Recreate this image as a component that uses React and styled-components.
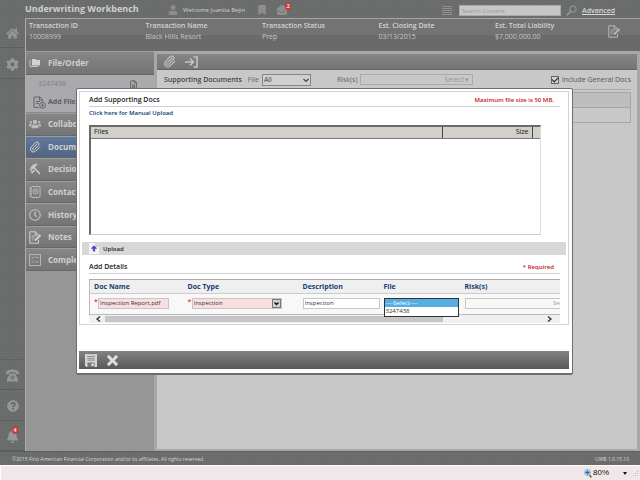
import React from "react";
import styled, { createGlobalStyle } from "styled-components";
import {
  FaHome,
  FaCog,
  FaQuestionCircle,
  FaBell,
  FaUser,
  FaBookmark,
  FaEnvelopeOpen,
  FaUsers,
  FaRegClock,
} from "react-icons/fa";
import { ImCross } from "react-icons/im";
import { Paperclip, FileUser } from "lucide-react";

const GlobalStyle = createGlobalStyle`
  * {
    box-sizing: border-box;
  }
  body {
    margin: 0;
    font-family: "Open Sans", "Noto Sans", sans-serif;
    font-size: 7px;
    line-height: 10px;
    color: #333;
  }
  button, input, select {
    font: inherit;
    color: inherit;
    margin: 0;
    padding: 0;
    border: none;
    border-radius: 0;
    background: none;
  }
  svg {
    display: block;
    flex: none;
  }
`;

const dots = `
  background-color: #6a6c6c;
  background-image: radial-gradient(#717373 1px, transparent 1px);
  background-size: 3px 3px;
`;

const Page = styled.div`
  min-height: 100vh;
  display: flex;
  flex-direction: column;
  background: #a8a8a8;
`;

const Header = styled.header`
  ${dots}
  height: 18px;
  padding-left: 25px;
  display: grid;
  grid-template-columns: 143px 1fr 198px;
  align-items: center;
  color: #cfcfcf;
`;

const Brand = styled.h1`
  margin: 0;
  font-size: 9px;
  font-weight: 700;
  line-height: 16px;
  white-space: nowrap;
`;

const UserBar = styled.div`
  display: flex;
  align-items: center;
  font-size: 6px;
  color: #d2d2d2;
  white-space: nowrap;
  padding-top: 2px;
  > svg {
    color: #8c8c8c;
  }
  span {
    margin: 0 12px 0 5px;
  }
`;

const IconButton = styled.button`
  position: relative;
  display: flex;
  align-items: center;
  justify-content: center;
  color: ${(props) => props.$color || "#8e8e8e"};
  margin-right: ${(props) => props.$gap || 0}px;
`;

const Badge = styled.b`
  position: absolute;
  top: ${(props) => props.$top || -3}px;
  right: ${(props) => props.$right || 0}px;
  width: 6px;
  height: 8px;
  border-radius: 3px;
  background: #c93b3b;
  color: #f3dada;
  font-size: 6px;
  line-height: 8px;
  text-align: center;
`;

const SearchBar = styled.form`
  display: flex;
  align-items: center;
  gap: 5px;
  padding-top: 3px;
`;

const SearchInput = styled.input`
  width: 102px;
  height: 11px;
  padding: 0 2px;
  background: #c6c6c6;
  border: 1px solid #a8a8a8;
  font-size: 6px;
  &::placeholder {
    color: #9a9a9a;
    opacity: 1;
  }
`;

const AdvancedLink = styled.a`
  font-weight: 600;
  color: #d8d8d8;
`;

const Shell = styled.div`
  flex: 1;
  display: flex;
`;

const Rail = styled.nav`
  ${dots}
  width: 25px;
  display: flex;
  flex-direction: column;
`;

const RailButton = styled.button`
  position: relative;
  height: ${(props) => (props.$first ? 30 : 31)}px;
  padding-top: 2px;
  display: flex;
  align-items: center;
  justify-content: center;
  color: #969898;
  border-bottom: 1px solid #5c5e5e;
`;

const RailSpace = styled.div`
  flex: 1;
  border-bottom: 1px solid #606262;
`;

const Body = styled.div`
  flex: 1;
  display: flex;
  flex-direction: column;
  min-width: 0;
  border-left: 1px solid #aeaeae;
`;

const Summary = styled.dl`
  margin: 0;
  height: 33px;
  padding: 2px 19px 0 3px;
  display: grid;
  grid-template-columns: repeat(4, 1fr) 113px 13px;
  background: linear-gradient(#737373 50%, #6a6a6a 50%);
  border-top: 1px solid #a6a6a6;
  color: #c6c6c6;
  white-space: nowrap;
  dt {
    font-weight: 600;
    line-height: 10px;
    color: #d2d2d2;
  }
  dd {
    margin: 0;
    line-height: 12px;
  }
`;

const SummaryAction = styled.div`
  align-self: start;
  padding-top: 4px;
  color: #b8b8b8;
`;

const Columns = styled.div`
  flex: 1;
  display: flex;
  gap: 3px;
  padding-right: 3px;
`;

const Sidebar = styled.aside`
  width: 128px;
  background: #969696;
`;

const NavList = styled.div`
  height: 158px;
  display: grid;
  grid-auto-rows: 1fr;
`;

const NavItem = styled.button`
  width: 100%;
  height: ${(props) => (props.$tall ? "24px" : "auto")};
  padding-left: 3px;
  display: grid;
  grid-template-columns: 19px 1fr;
  align-items: center;
  text-align: left;
  font-size: 8px;
  font-weight: 700;
  color: #d0d0d0;
  background: ${(props) =>
    props.$active
      ? "linear-gradient(#60799a, #4f6582)"
      : "linear-gradient(#868686, #747474)"};
  border-top: 1px solid #9c9c9c;
  border-bottom: 1px solid #666;
`;

const FileBox = styled.div`
  height: 38px;
  padding: 4px 16px 0 12px;
  background: #a9a9ae;
  border-bottom: 1px solid #8a8a8a;
  color: #808080;
`;

const FileRow = styled.div`
  display: flex;
  align-items: center;
  justify-content: space-between;
  height: 10px;
`;

const AddFile = styled.button`
  display: flex;
  align-items: center;
  gap: 2px;
  height: 14px;
  margin: 6px 0 0 -5px;
  font-weight: 700;
  color: #606060;
`;

const Content = styled.main`
  flex: 1;
  min-width: 0;
  margin: 3px 0 2px;
  background: #c8c8c8;
`;

const Toolbar = styled.div`
  height: 16px;
  padding-left: 6px;
  display: flex;
  align-items: center;
  gap: 9px;
  background: linear-gradient(#868686, #747474);
  border-bottom: 1px solid #666;
`;

const Filters = styled.div`
  display: flex;
  align-items: center;
  height: 19px;
  padding: 0 6px 0 7px;
  color: #666;
  white-space: nowrap;
  strong {
    font-weight: 600;
    color: #444;
    margin-right: 6px;
  }
  label {
    display: flex;
    align-items: center;
  }
`;

const SelectWrap = styled.div`
  position: relative;
  display: flex;
  svg {
    position: absolute;
    right: ${(props) => props.$inset || 0}px;
    top: ${(props) => props.$inset || 0}px;
    pointer-events: none;
  }
`;

const FileFilter = styled.select`
  width: 49px;
  height: 12px;
  margin-left: 3px;
  padding-left: 1px;
  background: #cfcfcf;
  border: 1px solid #858585;
  color: #444;
  appearance: none;
`;

const RiskLabel = styled.span`
  margin-left: 26px;
`;

const RiskButton = styled.button`
  width: 113px;
  height: 11px;
  margin-left: 2px;
  padding-right: 2px;
  border: 1px solid #aaa;
  color: #969696;
  text-align: right;
  line-height: 9px;
`;

const IncludeDocs = styled.label`
  margin-left: auto;
  gap: 3px;
  color: #555;
`;

const Tick = styled.input`
  appearance: none;
  width: 8px;
  height: 8px;
  padding: 0 0 1px;
  display: grid;
  place-items: center;
  border: 1px solid #666;
  background: #d2d2d2;
  &:checked::before {
    content: "";
    width: 5px;
    height: 3px;
    border-left: 1px solid #222;
    border-bottom: 1px solid #222;
    transform: rotate(-45deg);
  }
`;

const EmptyGrid = styled.div`
  margin: 0 6px 0 7px;
  height: 35px;
  border-top: 1px solid #aaa;
  padding-top: 2px;
  div {
    height: 16px;
    border: 1px solid #a6a6a6;
    margin-bottom: -1px;
    &:first-child {
      background: #bebebe;
    }
  }
`;

const Footer = styled.footer`
  ${dots}
  height: 14px;
  padding: 0 11px 0 12px;
  display: flex;
  align-items: center;
  justify-content: space-between;
  border-top: 1px solid #5e6060;
  font-size: 5px;
  color: #d8d8d8;
`;

const StatusBar = styled.div`
  height: 15px;
  padding-right: 1px;
  display: flex;
  align-items: center;
  justify-content: flex-end;
  background: #f0e8e8;
  border-top: 1px solid #fff;
  border-left: 1px solid #fff;
  color: #111;
`;

const ZoomButton = styled.button`
  display: flex;
  align-items: center;
  gap: 1px;
  margin-right: 6px;
  font-family: "Liberation Sans", sans-serif;
  font-size: 8px;
`;

const Caret = styled.i`
  border: 2px solid transparent;
  border-top: 3px solid #111;
  border-bottom: 0;
  margin: 0 0 0 13px;
`;

/* modal */
const Modal = styled.section`
  position: absolute;
  top: 88px;
  left: 76px;
  right: 67px;
  padding: 2px 3px 4px 2px;
  background: #fff;
  border: 1px solid #6e6e6e;
  border-bottom-width: 2px;
  border-radius: 2px;
`;

const ModalBody = styled.div`
  padding: 2px 2px 0 2px;
  border: 1px solid #d4d4d4;
`;

const Inset = styled.div`
  margin: 0 6px 0 7px;
`;

const Heading = styled.div`
  display: flex;
  align-items: center;
  justify-content: space-between;
  height: ${(props) => props.$height}px;
  padding: ${(props) => props.$top || 0}px 6px 0 0;
  border-bottom: 1px solid #d0d0d0;
  h2 {
    margin: 0;
    font-size: 7px;
    font-weight: 600;
    color: #222;
  }
  em {
    font-style: normal;
    font-size: 6px;
    font-weight: 600;
    color: #c4161c;
  }
`;

const ManualLink = styled.a`
  display: block;
  height: 18px;
  line-height: 12px;
  font-size: 6px;
  font-weight: 600;
  color: #003a70;
  text-decoration: none;
`;

const FilesBox = styled.div`
  height: 110px;
  margin: 0 19px 7px 0;
  border: 1px solid #6a6a6a;
  border-width: 2px 1px 1px 2px;
  border-right-color: #ddd;
  border-bottom-color: #ccc;
`;

const FilesTable = styled.table`
  width: 100%;
  border-collapse: collapse;
  table-layout: fixed;
  th {
    height: 11px;
    padding: 0 3px;
    line-height: 10px;
    background: #d2d0c8;
    border-bottom: 1px solid #777;
    font-weight: 400;
    text-align: left;
    color: #111;
  }
  th + th {
    width: 90px;
    border-left: 1px solid #444;
    text-align: right;
  }
  th:last-child {
    width: 8px;
  }
`;

const UploadButton = styled.button`
  width: 100%;
  height: 13px;
  padding-left: 7px;
  display: flex;
  align-items: center;
  gap: 4px;
  background: #d7d7d7;
  font-size: 6px;
  font-weight: 600;
  color: #222;
`;

const DetailsPane = styled.div`
  position: relative;
  overflow: hidden;
  margin-top: 5px;
  margin-bottom: 1px;
`;

const DetailsTable = styled.table`
  width: 600px;
  border-collapse: collapse;
  table-layout: fixed;
  background: #f8f8f8;
  border: 1px solid #bbb;
  border-top: 1px solid #aaa;
  th {
    height: 14px;
    padding: 0 0 0 4px;
    text-align: left;
    background: #efefef;
    border-bottom: 1px solid #ccc;
    font-weight: 700;
    color: #153e72;
  }
  td {
    position: relative;
    height: 21px;
    padding: 0 0 2px 4px;
  }
`;

const Field = styled.div`
  display: flex;
  align-items: center;
  gap: 2px;
  i {
    width: 2px;
    line-height: 8px;
    align-self: flex-start;
    font-style: normal;
    color: #d00;
  }
`;

const TextField = styled.input`
  width: ${(props) => props.$width}px;
  height: 11px;
  padding: 0 1px;
  font-size: 6px;
  color: #333;
  border: 1px solid #c6c6c6;
  background: ${(props) => (props.$required ? "#f9dfe0" : "#fff")};
`;

const TypeSelect = styled.select`
  width: 90px;
  height: 11px;
  padding: 0 1px;
  appearance: none;
  border: 1px solid #c6c6c6;
  background: #f9dfe0;
  font-size: 6px;
  line-height: 9px;
  color: #333;
`;

const OpenList = styled.select`
  position: absolute;
  left: 4px;
  top: 4px;
  z-index: 1;
  width: 75px;
  height: 19px;
  overflow: hidden;
  appearance: none;
  background: #fff;
  border: 1px solid #333;
  font-size: 6px;
  option {
    min-height: 0;
    height: 8px;
    padding: 0 1px;
    line-height: 8px;
    color: #333;
  }
  option:checked {
    color: #fff;
    background: #55aee0 linear-gradient(#55aee0, #55aee0);
  }
`;

const RiskField = styled.button`
  display: block;
  width: 110px;
  height: 11px;
  padding-right: 4px;
  border: 1px solid #c6c6c6;
  background: #f8f8f8;
  font-size: 6px;
  line-height: 9px;
  text-align: right;
  color: #98a4ac;
`;

const ScrollBar = styled.div`
  height: 8px;
  display: flex;
  align-items: center;
  background: #f0f0f0;
  color: #444;
`;

const Thumb = styled.div`
  width: 338px;
  height: 6px;
  margin-right: auto;
  background: #c6c6c6;
`;

const ScrollButton = styled.button`
  width: 16px;
  height: 8px;
  display: flex;
  align-items: center;
  padding: 1px 4px 1px 7px;
  &:last-child {
    width: 20px;
  }
`;

const ActionBar = styled.div`
  height: 18px;
  margin-top: 26px;
  padding: 0 6px;
  display: flex;
  align-items: center;
  gap: 10px;
  background: linear-gradient(#828283, #5a575a);
`;

const PhoneIcon = () => (
  <svg width="15" height="13" viewBox="0 0 15 13" fill="currentColor">
    <path d="M1 4.500V3Q3 .5 7.500 .5T14 3v1.500q0 .8-1 .8h-1.500q-.8 0-.8-.8V3.600Q7.500 2.600 4.300 3.600v.9q0 .8-.8.8H2q-1 0-1-.8Z" />
    <path
      fillRule="evenodd"
      d="M5 4.500h5L11 6.500l2 3.500v2.500H2V10l2-3.500ZM7.500 6.500a2 2 0 1 0 0 4 2 2 0 0 0 0-4Z"
    />
    <circle cx="7.500" cy="8.500" r="1" />
  </svg>
);

const LinesIcon = () => (
  <svg width="12" height="10" viewBox="0 0 12 10" stroke="#8e8e8e">
    <path d="M0 .5h10M0 2.500h10M0 4.500h10M0 6.500h10M0 8.500h10M11 4.500h1" />
  </svg>
);

const SearchIcon = () => (
  <svg width="11" height="11" viewBox="0 0 11 11" fill="none" stroke="#9a9a9a">
    <circle cx="7" cy="4" r="3.200" />
    <path d="M4.500 6.500L.8 10.200" strokeWidth="1.600" />
  </svg>
);

const EnterIcon = () => (
  <svg width="13" height="12" viewBox="0 0 13 12" fill="none" stroke="#c4c4c4" strokeWidth="1.600">
    <path d="M0 6h8M5 2.500L8.500 6 5 9.500M8.500 1h3.500v10H8.500" />
  </svg>
);

const GavelIcon = () => (
  <svg width="12" height="12" viewBox="0 0 12 12" stroke="#c8c8c8" strokeLinecap="round">
    <path d="M3 5l2.500-2.500" strokeWidth="3" />
    <path d="M1.200 6.500l1.300 1.300M6.800 1L8 2.200" strokeWidth="1.200" />
    <path d="M5.500 5L10.500 10.500M3 9.500L5 7.800" strokeWidth="1.700" />
  </svg>
);

const ContactIcon = () => (
  <svg width="12" height="12" viewBox="0 0 12 12" fill="none" stroke="#bdbdbd">
    <rect x="2" y=".6" width="9" height="10.800" rx="1" />
    <path d="M.3 2.500h2M.3 5h2M.3 7.500h2M.3 9.800h2" />
    <circle cx="6.500" cy="5.500" r="2.500" />
    <circle cx="6.500" cy="5.500" r=".7" />
  </svg>
);

const NoteIcon = () => (
  <svg width="13" height="13" viewBox="0 0 13 13" fill="none" stroke="currentColor">
    <path d="M9.500 9v3.200H.8V.8H6.500L9.500 3.800M6.200 .8v3.200H9" />
    <path d="M2.500 5h4M2.500 7h3M2.500 9h2" strokeWidth=".8" />
    <path d="M6 9.500L11.500 4" strokeWidth="2" />
  </svg>
);

const FoldersIcon = () => (
  <svg width="12" height="10" viewBox="0 0 12 10">
    <path d="M1 2v6.500h8" fill="none" stroke="#c4c4c4" />
    <path d="M3 1h3.500l1 1H11v5.500H3Z" fill="#d2d2d2" />
  </svg>
);

const ChecklistIcon = () => (
  <svg width="12" height="12" viewBox="0 0 12 12" fill="none" stroke="#b4b4b4">
    <rect x=".5" y=".5" width="11" height="11" />
    <path d="M2.500 3.500l1 1 1.500-2M6.500 3.500h3M2.500 7.500l1 1 1.500-2M6.500 8h3" strokeWidth=".9" />
  </svg>
);

const FilePlusIcon = () => (
  <svg width="13" height="13" viewBox="0 0 13 13" fill="none" stroke="#666">
    <path d="M6 11.500H1V1h6l2.500 2.500V6M6.500 1v3H9M3 5.500h4M3 7.500h3" />
    <circle cx="9.500" cy="9.300" r="2.900" />
    <path d="M9.500 7.800v3M8 9.300h3" strokeWidth=".8" />
  </svg>
);

const UploadIcon = () => (
  <svg width="10" height="11" viewBox="0 0 10 11">
    <path d="M0 0h7l3 3v8H0Z" fill="#f4f4f6" />
    <path d="M7 0v3h3" fill="none" stroke="#aaa" strokeWidth=".8" />
    <path d="M5 2.500l3 3H6.200V8.500H3.800V5.500H2Z" fill="#7245c8" />
    <path d="M5 2.500l3 3H2Z" fill="#3a50b8" />
  </svg>
);

const SaveIcon = () => (
  <svg width="12" height="13" viewBox="0 0 12 13">
    <path d="M0 0h12v13H1.500L0 11.500Z" fill="#d4d4d4" />
    <path d="M2.500 .8h7v5.700h-7Z" fill="#777" />
    <path d="M2.500 1.500h7M2.500 3.300h7M2.500 5.100h7" stroke="#e8e8e8" strokeWidth=".9" />
    <path d="M2.500 8.500h7V13h-7Z" fill="#777" />
    <path d="M6.500 9.500h2V12h-2Z" fill="#eee" />
  </svg>
);

const Chevron = ({ left }) => (
  <svg width="5" height="6" viewBox="0 0 5 6" fill="none" stroke="#333" strokeWidth="1.400">
    <path d={left ? "M4 .5L1 3l3 2.500" : "M1 .5L4 3 1 5.500"} />
  </svg>
);

const ZoomIcon = () => (
  <svg width="8" height="9" viewBox="0 0 8 9">
    <path d="M5 5.500l2.500 3" stroke="#8a5a30" strokeWidth="1.500" />
    <circle cx="3.500" cy="3.500" r="3" fill="#cfe6f8" stroke="#7fa6c8" strokeWidth=".8" />
    <path d="M3.500 1.500v4M1.500 3.500h4" stroke="#1464c0" strokeWidth="1.300" />
  </svg>
);

const summary = [
  { label: "Transaction ID", value: "10008999" },
  { label: "Transaction Name", value: "Black Hills Resort" },
  { label: "Transaction Status", value: "Prep" },
  { label: "Est. Closing Date", value: "03/13/2015" },
  { label: "Est. Total Liability", value: "$7,000,000.00" },
];

const menu = [
  { title: "Collaboration", icon: <FaUsers size={12} color="#bdbdbd" /> },
  { title: "Documents", icon: <Paperclip size={12} />, active: true },
  { title: "Decision", icon: <GavelIcon /> },
  { title: "Contacts", icon: <ContactIcon /> },
  { title: "History", icon: <FaRegClock size={12} color="#bdbdbd" /> },
  { title: "Notes", icon: <NoteIcon /> },
  { title: "Completion", icon: <ChecklistIcon /> },
];

const AddDocsModal = () => {
  return (
    <Modal role="dialog" aria-label="Add Supporting Docs">
      <ModalBody>
        <Inset>
          <Heading $height={13}>
            <h2>Add Supporting Docs</h2>
            <em>Maximum file size is 50 MB.</em>
          </Heading>
          <ManualLink href="#manual">Click here for Manual Upload</ManualLink>
          <FilesBox>
            <FilesTable>
              <thead>
                <tr>
                  <th>Files</th>
                  <th>Size</th>
                  <th />
                </tr>
              </thead>
            </FilesTable>
          </FilesBox>
        </Inset>
        <UploadButton>
          <UploadIcon />
          Upload
        </UploadButton>
        <Inset>
          <Heading $height={19} $top={6}>
            <h2>Add Details</h2>
            <em>* Required</em>
          </Heading>
          <DetailsPane>
            <DetailsTable>
              <colgroup>
                <col width="94" />
                <col width="115" />
                <col width="81" />
                <col width="81" />
                <col />
              </colgroup>
              <thead>
                <tr>
                  <th>Doc Name</th>
                  <th>Doc Type</th>
                  <th>Description</th>
                  <th>File</th>
                  <th>Risk(s)</th>
                </tr>
              </thead>
              <tbody>
                <tr>
                  <td>
                    <Field>
                      <i>*</i>
                      <TextField
                        aria-label="Doc Name"
                        $width={71}
                        $required
                        defaultValue="Inspection Report.pdf"
                      />
                    </Field>
                  </td>
                  <td>
                    <Field>
                      <i>*</i>
                      <SelectWrap $inset={1}>
                        <TypeSelect aria-label="Doc Type">
                          <option>Inspection</option>
                        </TypeSelect>
                        <svg width="9" height="9" viewBox="0 0 9 9">
                          <rect x=".5" y=".5" width="8" height="8" fill="#d2d0c8" stroke="#777" />
                          <path d="M2.500 3.500l2 2 2-2" fill="none" stroke="#111" strokeWidth="1.300" />
                        </svg>
                      </SelectWrap>
                    </Field>
                  </td>
                  <td>
                    <TextField aria-label="Description" $width={77} defaultValue="Inspection" />
                  </td>
                  <td>
                    <OpenList aria-label="File" size={2} defaultValue="">
                      <option value="">----Select----</option>
                      <option value="3247438">3247438</option>
                    </OpenList>
                  </td>
                  <td>
                    <RiskField>Select</RiskField>
                  </td>
                </tr>
              </tbody>
            </DetailsTable>
            <ScrollBar>
              <ScrollButton aria-label="Scroll left">
                <Chevron left />
              </ScrollButton>
              <Thumb />
              <ScrollButton aria-label="Scroll right">
                <Chevron />
              </ScrollButton>
            </ScrollBar>
          </DetailsPane>
        </Inset>
      </ModalBody>
      <ActionBar>
        <IconButton aria-label="Save">
          <SaveIcon />
        </IconButton>
        <IconButton aria-label="Close" $color="#dedede">
          <ImCross size={11} />
        </IconButton>
      </ActionBar>
    </Modal>
  );
};

const App = () => {
  return (
    <Page>
      <GlobalStyle />
      <Header>
        <Brand>Underwriting Workbench</Brand>
        <UserBar>
          <FaUser size={10} />
          <span>Welcome Juanita Bejin</span>
          <IconButton aria-label="Bookmarks" $gap={10}>
            <FaBookmark size={10} />
          </IconButton>
          <IconButton aria-label="Messages">
            <FaEnvelopeOpen size={10} />
            <Badge $right={-4}>2</Badge>
          </IconButton>
        </UserBar>
        <SearchBar>
          <IconButton type="button" aria-label="Menu">
            <LinesIcon />
          </IconButton>
          <SearchInput aria-label="Search Content" placeholder="Search Content" />
          <SearchIcon />
          <AdvancedLink href="#advanced">Advanced</AdvancedLink>
        </SearchBar>
      </Header>
      <Shell>
        <Rail>
          <RailButton $first aria-label="Home">
            <FaHome size={13} />
          </RailButton>
          <RailButton aria-label="Settings">
            <FaCog size={13} />
          </RailButton>
          <RailSpace />
          <RailButton $first aria-label="Phone">
            <PhoneIcon />
          </RailButton>
          <RailButton aria-label="Help">
            <FaQuestionCircle size={12} />
          </RailButton>
          <RailButton $first aria-label="Alerts">
            <FaBell size={13} />
            <Badge $top={5} $right={7}>
              4
            </Badge>
          </RailButton>
        </Rail>
        <Body>
          <Summary>
            {summary.map((item) => (
              <div key={item.label}>
                <dt>{item.label}</dt>
                <dd>{item.value}</dd>
              </div>
            ))}
            <SummaryAction>
              <NoteIcon />
            </SummaryAction>
          </Summary>
          <Columns>
            <Sidebar>
              <NavItem $tall>
                <FoldersIcon />
                File/Order
              </NavItem>
              <FileBox>
                <FileRow>
                  3247438
                  <FileUser size={9} color="#555" />
                </FileRow>
                <AddFile>
                  <FilePlusIcon />
                  Add File
                </AddFile>
              </FileBox>
              <NavList>
                {menu.map((item) => (
                  <NavItem key={item.title} $active={item.active}>
                    {item.icon}
                    {item.title}
                  </NavItem>
                ))}
              </NavList>
            </Sidebar>
            <Content>
              <Toolbar>
                <IconButton aria-label="Attach" $color="#c4c4c4">
                  <Paperclip size={13} />
                </IconButton>
                <IconButton aria-label="Import">
                  <EnterIcon />
                </IconButton>
              </Toolbar>
              <Filters>
                <strong>Supporting Documents</strong>
                <label>
                  File
                  <SelectWrap>
                    <FileFilter>
                      <option>All</option>
                    </FileFilter>
                    <svg width="10" height="12" viewBox="0 0 10 12" fill="none" stroke="#444">
                      <path d="M2.500 5l2.500 2.500L7.500 5" strokeWidth="1.200" />
                    </svg>
                  </SelectWrap>
                </label>
                <RiskLabel>Risk(s)</RiskLabel>
                <RiskButton>Select ▾</RiskButton>
                <IncludeDocs>
                  <Tick type="checkbox" defaultChecked />
                  Include General Docs
                </IncludeDocs>
              </Filters>
              <EmptyGrid>
                <div />
                <div />
              </EmptyGrid>
            </Content>
          </Columns>
        </Body>
      </Shell>
      <Footer>
        <span>
          ©2015 First American Financial Corporation and/or its affiliates. All rights reserved.
        </span>
        <span>UWB 1.0.15.10</span>
      </Footer>
      <StatusBar>
        <ZoomButton>
          <ZoomIcon />
          80%
          <Caret />
        </ZoomButton>
        <svg width="6" height="8" viewBox="0 0 6 8" fill="#bbb">
          <path d="M4 2h1v1H4zM2 4h1v1H2zM4 4h1v1H4zM0 6h1v1H0zM2 6h1v1H2zM4 6h1v1H4z" />
        </svg>
      </StatusBar>
      <AddDocsModal />
    </Page>
  );
};

export default App;
